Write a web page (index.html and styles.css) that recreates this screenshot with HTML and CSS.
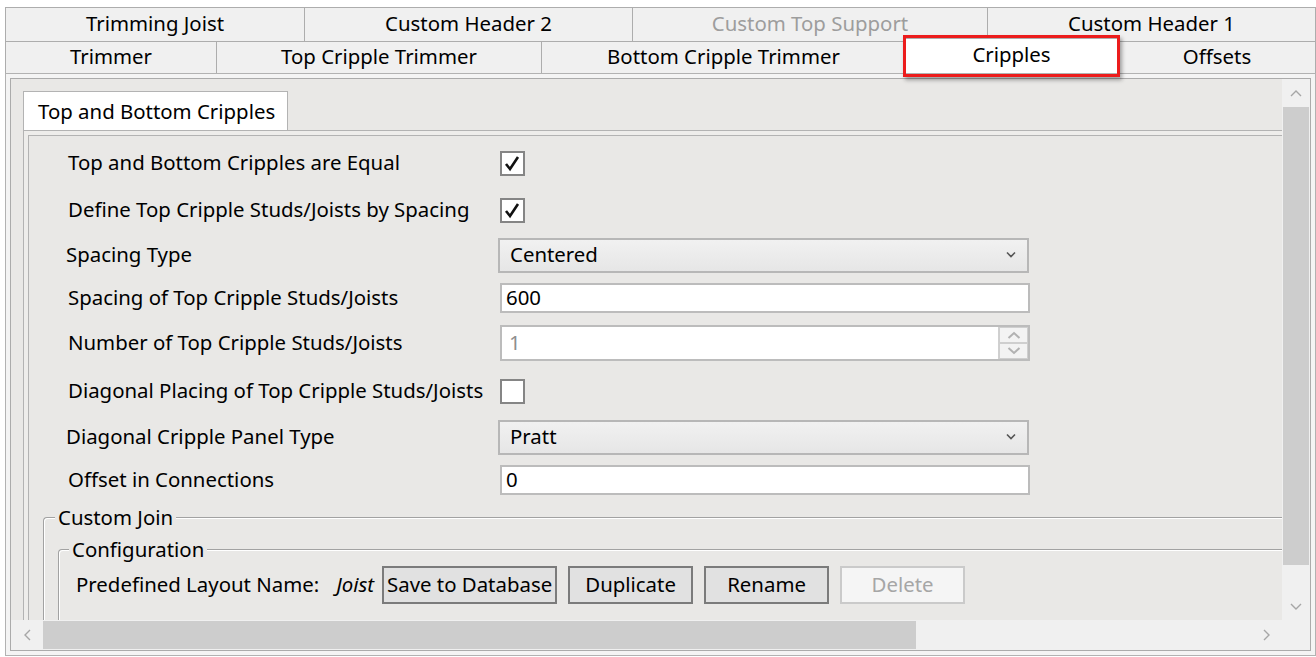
FILE: index.html
```html
<!DOCTYPE html>
<html lang="en">
<head>
<meta charset="utf-8">
<title>Cripples</title>
<link rel="stylesheet" href="styles.css">
</head>
<body>
<div class="window">
  <div class="tabrow row1">
    <div class="tab">Trimming Joist</div>
    <div class="tab">Custom Header 2</div>
    <div class="tab disabled">Custom Top Support</div>
    <div class="tab">Custom Header 1</div>
  </div>
  <div class="tabrow row2">
    <div class="tab">Trimmer</div>
    <div class="tab">Top Cripple Trimmer</div>
    <div class="tab">Bottom Cripple Trimmer</div>
    <div class="tab active">Cripples</div>
    <div class="tab">Offsets</div>
  </div>
  <div class="highlight"></div>

  <div class="panel">
    <div class="scroller">
      <div class="viewport">
        <div class="subtabs">
          <div class="subtab">Top and Bottom Cripples</div>
        </div>
        <div class="subpanel">
          <div class="subinner">
            <div class="form">
              <div class="row check">
                <span class="label">Top and Bottom Cripples are Equal</span>
                <span class="checkbox"><svg viewBox="0 0 21 21" width="21" height="21"><polyline points="4,11 8,16 16,4" fill="none" stroke="#111" stroke-width="2.6"/></svg></span>
              </div>
              <div class="row check">
                <span class="label">Define Top Cripple Studs/Joists by Spacing</span>
                <span class="checkbox"><svg viewBox="0 0 21 21" width="21" height="21"><polyline points="4,11 8,16 16,4" fill="none" stroke="#111" stroke-width="2.6"/></svg></span>
              </div>
              <div class="row select">
                <span class="label tight">Spacing Type</span>
                <div class="dropdown"><span>Centered</span><svg viewBox="0 0 10 7" width="10" height="7"><path d="M1 1.5 L5 5.5 L9 1.5" fill="none" stroke="#555" stroke-width="1.6"/></svg></div>
              </div>
              <div class="row text">
                <span class="label">Spacing of Top Cripple Studs/Joists</span>
                <div class="textbox">600</div>
              </div>
              <div class="row spin">
                <span class="label">Number of Top Cripple Studs/Joists</span>
                <div class="textbox spinbox">
                  <span class="value">1</span>
                  <span class="spinners">
                    <span class="spin-btn"><svg viewBox="0 0 14 8" width="14" height="8"><path d="M1.5 7 L7 2 L12.5 7" fill="none" stroke="#b2b2b2" stroke-width="2"/></svg></span>
                    <span class="spin-btn"><svg viewBox="0 0 14 8" width="14" height="8"><path d="M1.5 1 L7 6 L12.5 1" fill="none" stroke="#b2b2b2" stroke-width="2"/></svg></span>
                  </span>
                </div>
              </div>
              <div class="row check loose">
                <span class="label">Diagonal Placing of Top Cripple Studs/Joists</span>
                <span class="checkbox"></span>
              </div>
              <div class="row select">
                <span class="label tight">Diagonal Cripple Panel Type</span>
                <div class="dropdown"><span>Pratt</span><svg viewBox="0 0 10 7" width="10" height="7"><path d="M1 1.5 L5 5.5 L9 1.5" fill="none" stroke="#555" stroke-width="1.6"/></svg></div>
              </div>
              <div class="row text">
                <span class="label">Offset in Connections</span>
                <div class="textbox">0</div>
              </div>
            </div>

            <fieldset class="group">
              <legend>Custom Join</legend>
              <fieldset class="group inner">
                <legend>Configuration</legend>
                <div class="config-row">
                  <span class="config-label">Predefined Layout Name:</span>
                  <span class="layout-name">Joist</span>
                  <button class="btn w-save">Save to Database</button>
                  <button class="btn w-dup">Duplicate</button>
                  <button class="btn w-ren">Rename</button>
                  <button class="btn w-del" disabled>Delete</button>
                </div>
              </fieldset>
            </fieldset>
          </div>
        </div>
      </div>

      <div class="vscroll">
        <span class="arrow"><svg viewBox="0 0 12 7" width="12" height="7"><path d="M1 6 L6 1 L11 6" fill="none" stroke="#a6a6a6" stroke-width="1.4"/></svg></span>
        <span class="vthumb"></span>
        <span class="vtrack"></span>
        <span class="arrow"><svg viewBox="0 0 12 7" width="12" height="7"><path d="M1 1 L6 6 L11 1" fill="none" stroke="#a6a6a6" stroke-width="1.4"/></svg></span>
      </div>
      <div class="hscroll">
        <span class="harrow"><svg viewBox="0 0 7 12" width="7" height="12"><path d="M6 1 L1 6 L6 11" fill="none" stroke="#a6a6a6" stroke-width="1.4"/></svg></span>
        <span class="hthumb"></span>
        <span class="htrack"></span>
        <span class="harrow"><svg viewBox="0 0 7 12" width="7" height="12"><path d="M1 1 L6 6 L1 11" fill="none" stroke="#a6a6a6" stroke-width="1.4"/></svg></span>
      </div>
      <div class="corner"></div>
    </div>
  </div>
</div>
</body>
</html>
```

FILE: styles.css
```css
* {
  box-sizing: border-box;
}

html,
body {
  margin: 0;
  background: #fff;
}

body {
  font-family: "Noto Sans", "Open Sans", sans-serif;
  font-size: 20.4px;
  color: #000;
  overflow: hidden;
}

.window {
  position: relative;
  margin: 7px 0 0 5px;
  width: 1311px;
  height: 649px;
  display: flex;
  flex-direction: column;
}

/* ---- top tab strip ---- */
.tabrow {
  display: grid;
  flex: none;
}

.row1 {
  height: 34px;
  grid-template-columns: 299px 328px 355px 1fr;
}

.row2 {
  height: 32px;
  grid-template-columns: 211px 325px 364px 213px 1fr;
}

.tab {
  background: #f0f0f0;
  border-top: 1px solid #adadad;
  border-left: 1px solid #adadad;
  display: flex;
  align-items: center;
  justify-content: center;
  line-height: 1;
  padding-bottom: 2px;
  white-space: nowrap;
}

.tab:last-child {
  border-right: 1px solid #adadad;
}

.tab.disabled {
  color: #9d9d9d;
}

.tab.active {
  position: relative;
  z-index: 1;
  background: #fff;
  margin: -3px -2px 0 -2px;
  border-right: 1px solid #adadad;
  padding-bottom: 4px;
}

.highlight {
  position: absolute;
  z-index: 2;
  left: 898px;
  top: 28px;
  width: 217px;
  height: 42px;
  border: 3px solid #ec1c1c;
  box-shadow: 2px 3px 4px rgba(0, 0, 0, 0.35);
  pointer-events: none;
}

/* ---- tab page ---- */
.panel {
  flex: 1;
  min-height: 0;
  border: 1px solid #b2b2b2;
  background: #f4f4f4;
  padding: 4px;
  display: flex;
}

.scroller {
  flex: 1;
  border: 1px solid #ababab;
  display: grid;
  grid-template-columns: minmax(0, 1fr) 28px;
  grid-template-rows: minmax(0, 1fr) 30px;
  min-width: 0;
  min-height: 0;
}

.viewport {
  overflow: hidden;
  background: #e9e8e6;
  padding: 12px 0 0 12px;
  min-width: 0;
  min-height: 0;
}

.subtabs {
  display: flex;
}

.subtab {
  width: 265px;
  height: 39px;
  background: #fff;
  border: 1px solid #b3b3b3;
  border-bottom: none;
  padding-left: 14px;
  display: flex;
  align-items: center;
  padding-bottom: 1px;
  white-space: nowrap;
}

.subpanel {
  width: 1400px;
  border-top: 1px solid #b3b3b3;
  border-left: 1px solid #b3b3b3;
  padding: 4px 0 0 4px;
  background: #eeedeb;
}

.subinner {
  border-top: 1px solid #b3b3b3;
  border-left: 1px solid #b3b3b3;
  background: #e9e8e6;
  padding-top: 4px;
  min-height: 600px;
}

/* ---- form rows ---- */
.form {
  padding-left: 39px;
}

.row {
  display: grid;
  grid-template-columns: 431px 531px;
  align-items: center;
  white-space: nowrap;
}

.row.check {
  height: 47px;
}

.row.check.loose {
  height: 50px;
}

.row.select {
  height: 42px;
}

.row.text {
  height: 44px;
}

.row.spin {
  height: 46px;
}

.label {
  padding-bottom: 3px;
}

.label.tight {
  margin-left: -2px;
}

.checkbox {
  width: 25px;
  height: 25px;
  margin-left: 1px;
  background: #fff;
  border: 2px solid #858585;
  display: flex;
  align-items: center;
  justify-content: center;
}

.dropdown {
  width: 531px;
  height: 35px;
  margin-left: -1px;
  border: 2px solid #b7b7b7;
  background: linear-gradient(#f1f1f1, #e6e6e6);
  display: flex;
  align-items: center;
  justify-content: space-between;
  padding: 0 11px 2px 10px;
}

.textbox {
  width: 530px;
  height: 30px;
  margin-left: 1px;
  background: #fff;
  border: 2px solid #bcbcbc;
  padding: 0 0 2px 4px;
  display: flex;
  align-items: center;
}

.spinbox {
  height: 36px;
  padding: 0;
  color: #8e8e8e;
  justify-content: space-between;
}

.spinbox .value {
  padding: 0 0 2px 7px;
}

.spinners {
  align-self: stretch;
  width: 30px;
  display: flex;
  flex-direction: column;
  border-left: 1px solid #d0d0d0;
}

.spin-btn {
  flex: 1;
  display: flex;
  align-items: center;
  justify-content: center;
  background: #f3f3f3;
  border: 1px solid #cfcfcf;
}

/* ---- group boxes ---- */
.group {
  margin: 2px 0 0 14px;
  padding: 0 0 0 13px;
  border: none;
  border-top: 1px solid #a2a2a2;
  border-left: 1px solid #a2a2a2;
  border-top-left-radius: 4px;
  box-shadow: inset 1px 1px 0 #fff;
  min-width: 0;
}

.group legend {
  margin-left: -2px;
  padding: 0 3px;
  line-height: 26px;
  background: #e9e8e6;
}

.group.inner {
  margin: 6px 0 0 1px;
  padding: 0 0 40px 14px;
}

.group.inner legend {
  margin-left: -4px;
}

.config-row {
  margin: 4px 0 0 3px;
  display: flex;
  align-items: center;
  white-space: nowrap;
}

.config-label {
  padding-bottom: 3px;
}

.layout-name {
  font-style: italic;
  margin-left: 17px;
  padding-bottom: 3px;
}

.btn {
  font: inherit;
  color: #000;
  height: 38px;
  padding: 0 0 3px;
  background: #e1e1e1;
  border: 2px solid #7b7b7b;
  margin-left: 11px;
}

.w-save {
  width: 175px;
  margin-left: 8px;
}

.w-dup {
  width: 125px;
}

.w-ren {
  width: 125px;
}

.w-del {
  width: 125px;
  background: #f5f5f5;
  border-color: #cacaca;
  color: #a6a6a6;
}

/* ---- scroll bars ---- */
.vscroll {
  background: #f0f0f0;
  display: flex;
  flex-direction: column;
  min-height: 0;
}

.vscroll .arrow {
  height: 28px;
  display: flex;
  align-items: center;
  justify-content: center;
  flex: none;
}

.vthumb {
  height: 458px;
  margin: 0 1px;
  background: #cdcdcd;
  flex: none;
}

.vtrack {
  flex: 1;
}

.hscroll {
  background: #f0f0f0;
  display: flex;
  align-items: stretch;
}

.harrow {
  width: 32px;
  display: flex;
  align-items: center;
  justify-content: center;
  flex: none;
}

.hthumb {
  width: 873px;
  margin: 1px 0;
  background: #cdcdcd;
  flex: none;
}

.htrack {
  flex: 1;
}

.corner {
  background: #f0f0f0;
}
```
